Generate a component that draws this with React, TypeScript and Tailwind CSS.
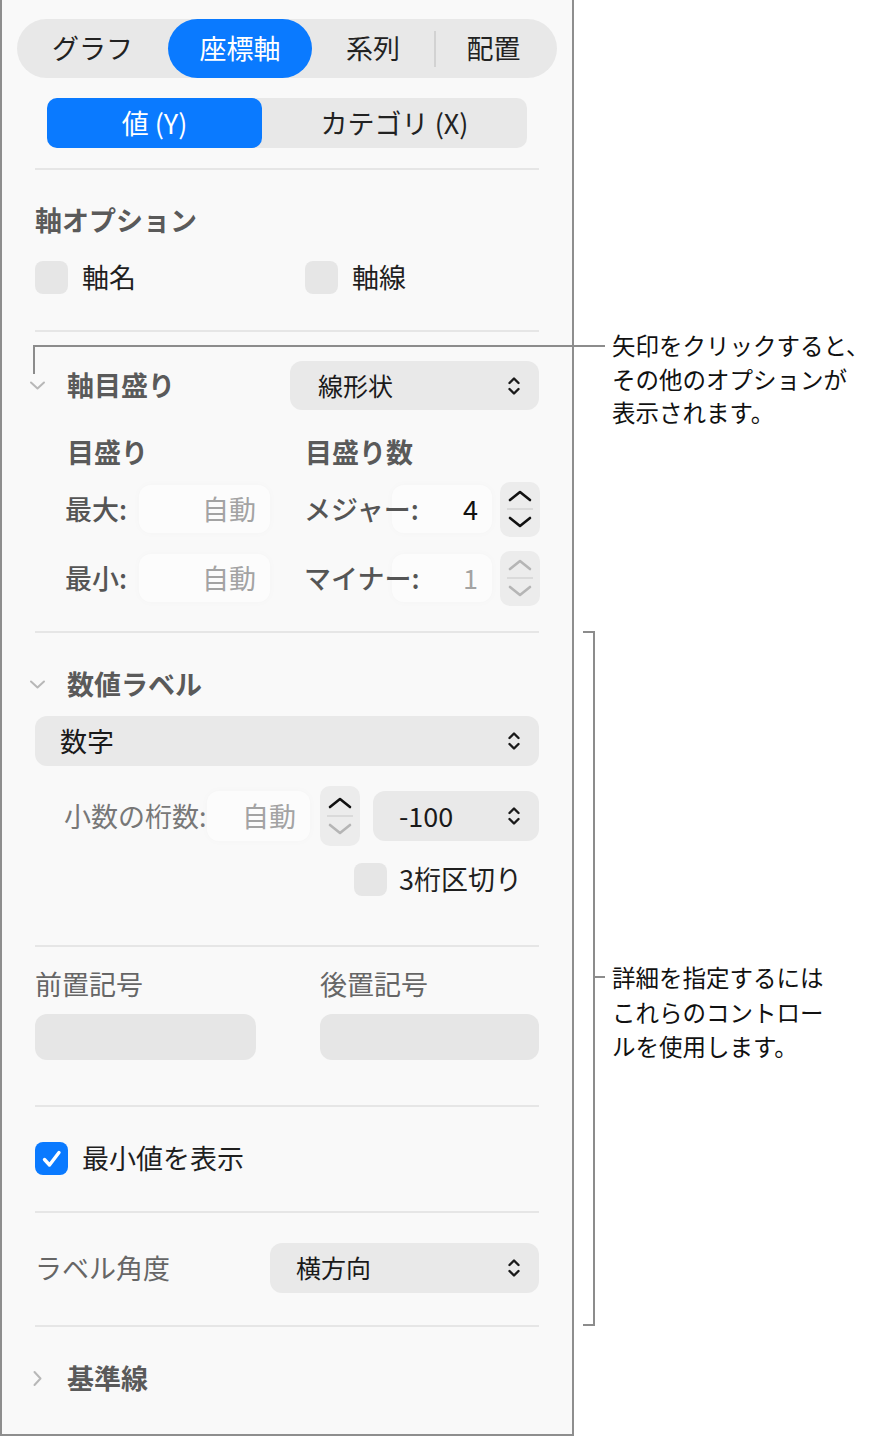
import React from "react";

const font = { fontFamily: '"Noto Sans CJK JP", "Noto Sans", sans-serif' };

function PopupArrows() {
  return (
    <svg width="14" height="22" viewBox="0 0 14 22" fill="none" stroke="#1a1a1a" strokeWidth="2.4" strokeLinecap="round" strokeLinejoin="round">
      <path d="M2.5 8L7 3.5L11.5 8" />
      <path d="M2.5 14L7 18.5L11.5 14" />
    </svg>
  );
}

function Popup({ label, className }: { label: string; className: string }) {
  return (
    <div className={`flex items-center justify-between rounded-[12px] bg-[#e9e9e9] pr-[18px] ${className}`}>
      <span className="whitespace-nowrap text-[#1a1a1a]">{label}</span>
      <PopupArrows />
    </div>
  );
}

function Stepper({ upDim, downDim, className }: { upDim?: boolean; downDim?: boolean; className: string }) {
  const up = upDim ? "#b5b5b5" : "#111111";
  const down = downDim ? "#b5b5b5" : "#111111";
  return (
    <div className={`flex w-[40px] shrink-0 flex-col items-center justify-center rounded-[10px] bg-[#ececec] ${className}`}>
      <svg width="26" height="14" viewBox="0 0 26 14" fill="none" stroke={up} strokeWidth="2.6" strokeLinecap="round" strokeLinejoin="round">
        <path d="M3 11L13 3L23 11" />
      </svg>
      <div className="my-[5px] h-[2px] w-[26px] bg-[#dadada]" />
      <svg width="26" height="14" viewBox="0 0 26 14" fill="none" stroke={down} strokeWidth="2.6" strokeLinecap="round" strokeLinejoin="round">
        <path d="M3 3L13 11L23 3" />
      </svg>
    </div>
  );
}

function Field({ value, className, valueClass = "text-[#a3a3a3]" }: { value: string; className: string; valueClass?: string }) {
  return (
    <div className={`flex shrink-0 items-center justify-end rounded-[12px] bg-white/50 pr-[14px] shadow-[0_0_8px_rgba(0,0,0,0.025)] ${className}`}>
      <span className={`whitespace-nowrap ${valueClass}`}>{value}</span>
    </div>
  );
}

function Checkbox({ checked }: { checked?: boolean }) {
  if (checked) {
    return (
      <div className="flex h-[33px] w-[33px] shrink-0 items-center justify-center rounded-[8px] bg-[#0a7aff]">
        <svg width="22" height="20" viewBox="0 0 22 20" fill="none" stroke="white" strokeWidth="3.4" strokeLinecap="round" strokeLinejoin="round">
          <path d="M3.5 10.5L8.5 16L18 3.5" />
        </svg>
      </div>
    );
  }
  return <div className="h-[33px] w-[33px] shrink-0 rounded-[8px] bg-[#e6e6e6]" />;
}

function Chevron({ dir }: { dir: "down" | "right" }) {
  return (
    <div className="flex w-[17px] justify-center">
      {dir === "down" ? (
        <svg width="17" height="11" viewBox="0 0 17 11" fill="none" stroke="#b8b8b8" strokeWidth="2" strokeLinecap="round" strokeLinejoin="round">
          <path d="M2 2.5L8.5 8.5L15 2.5" />
        </svg>
      ) : (
        <svg width="11" height="17" viewBox="0 0 11 17" fill="none" stroke="#b8b8b8" strokeWidth="2" strokeLinecap="round" strokeLinejoin="round">
          <path d="M2.5 2L8.5 8.5L2.5 15" />
        </svg>
      )}
    </div>
  );
}

function Divider({ className }: { className: string }) {
  return <div className={`h-[2px] bg-[#e6e6e6] ${className}`} />;
}

export default function App() {
  return (
    <div className="relative h-[1436px] w-[875px] bg-white text-[27px]" style={font}>
      <div className="w-[574px] border-x-2 border-b-2 border-[#8e8e8e] bg-[#f9f9f9] pb-[41px] pt-[19px]">
        {/* tabs */}
        <div className="mx-[15px] flex h-[59px] items-center rounded-full bg-[#e8e8e8] text-[27px] text-[#222]">
          <div className="flex w-[151px] justify-center">グラフ</div>
          <div className="flex h-[59px] w-[144px] items-center justify-center rounded-full bg-[#0a7aff] text-white">座標軸</div>
          <div className="flex w-[122px] justify-center">系列</div>
          <div className="h-[36px] w-[2px] bg-[#d2d2d2]" />
          <div className="flex flex-1 justify-center pr-[6px]">配置</div>
        </div>

        <div className="mx-[45px] mt-[20px] flex h-[50px] items-center rounded-[10px] bg-[#e8e8e8] text-[27px] text-[#222]">
          <div className="flex h-[50px] w-[215px] items-center justify-center rounded-[10px] bg-[#0a7aff] text-white">値 (Y)</div>
          <div className="flex flex-1 justify-center">カテゴリ (X)</div>
        </div>

        <div className="px-[33px]">
          <Divider className="mt-[20px]" />

          {/* 軸オプション */}
          <div className="mt-[35px] h-[30px] font-semibold leading-[30px] text-[#5a5a5a]">軸オプション</div>
          <div className="mt-[26px] flex h-[33px] items-center">
            <div className="flex w-[270px] items-center gap-[14px]">
              <Checkbox />
              <span className="text-[#1f1f1f]">軸名</span>
            </div>
            <div className="flex items-center gap-[14px]">
              <Checkbox />
              <span className="text-[#1f1f1f]">軸線</span>
            </div>
          </div>
          <Divider className="mt-[36px]" />

          {/* 軸目盛り */}
          <div className="mt-[29px] flex h-[49px] items-center">
            <div className="ml-[-6px] flex w-[261px] items-center">
              <Chevron dir="down" />
              <span className="ml-[21px] font-semibold text-[#5a5a5a]">軸目盛り</span>
            </div>
            <Popup label="線形状" className="h-[49px] flex-1 pl-[28px] text-[25px]" />
          </div>

          <div className="mt-[28px] flex h-[28px] items-center font-semibold text-[#5a5a5a]">
            <div className="w-[270px] pl-[32px]">目盛り</div>
            <div>目盛り数</div>
          </div>

          <div className="mt-[15px] flex h-[56px] items-center text-[#555]">
            <div className="relative z-10 box-content w-[74px] shrink-0 whitespace-nowrap pl-[30px] font-medium">最大:</div>
            <Field value="自動" className="h-[48px] w-[131px]" />
            <div className="relative z-10 ml-[34px] w-[88px] shrink-0 whitespace-nowrap font-medium">メジャー:</div>
            <Field value="4" valueClass="text-[#111]" className="h-[48px] w-[100px] pr-[12px]" />
            <Stepper className="ml-[8px] h-[55px]" />
          </div>

          <div className="mt-[13px] flex h-[56px] items-center text-[#555]">
            <div className="relative z-10 box-content w-[74px] shrink-0 whitespace-nowrap pl-[30px] font-medium">最小:</div>
            <Field value="自動" className="h-[48px] w-[131px]" />
            <div className="relative z-10 ml-[34px] w-[88px] shrink-0 whitespace-nowrap font-medium">マイナー:</div>
            <Field value="1" className="h-[48px] w-[100px] pr-[12px]" />
            <Stepper upDim downDim className="ml-[8px] h-[55px]" />
          </div>
          <Divider className="mt-[25px]" />

          {/* 数値ラベル */}
          <div className="ml-[-6px] mt-[36px] flex h-[30px] items-center">
            <Chevron dir="down" />
            <span className="ml-[21px] font-semibold text-[#5a5a5a]">数値ラベル</span>
          </div>
          <Popup label="数字" className="mt-[17px] h-[50px] pl-[25px] text-[27px]" />

          <div className="mt-[20px] flex h-[60px] items-center">
            <div className="relative z-10 box-content w-[143px] shrink-0 whitespace-nowrap pl-[29px] text-[#777]">小数の桁数:</div>
            <Field value="自動" className="h-[50px] w-[103px] pr-[10px]" />
            <Stepper downDim className="ml-[10px] h-[60px]" />
            <Popup label="-100" className="ml-[13px] h-[50px] flex-1 pl-[26px] text-[27px]" />
          </div>

          <div className="mt-[17px] flex h-[33px] items-center gap-[12px] pl-[319px]">
            <Checkbox />
            <span className="whitespace-nowrap text-[#1f1f1f]">3桁区切り</span>
          </div>
          <Divider className="mt-[49px]" />

          {/* 前置記号 / 後置記号 */}
          <div className="mt-[22px] flex h-[30px] items-center text-[#666]">
            <div className="w-[285px]">前置記号</div>
            <div>後置記号</div>
          </div>
          <div className="mt-[15px] flex h-[46px]">
            <div className="h-[46px] w-[221px] rounded-[12px] bg-[#e6e6e6]" />
            <div className="ml-[64px] h-[46px] flex-1 rounded-[12px] bg-[#e6e6e6]" />
          </div>
          <Divider className="mt-[45px]" />

          {/* 最小値を表示 */}
          <div className="mt-[35px] flex h-[33px] items-center gap-[14px]">
            <Checkbox checked />
            <span className="text-[#1f1f1f]">最小値を表示</span>
          </div>
          <Divider className="mt-[36px]" />

          {/* ラベル角度 */}
          <div className="mt-[30px] flex h-[50px] items-center">
            <div className="w-[235px] text-[#666]">ラベル角度</div>
            <Popup label="横方向" className="h-[50px] flex-1 pl-[26px] text-[25px]" />
          </div>
          <Divider className="mt-[32px]" />

          {/* 基準線 */}
          <div className="ml-[-6px] mt-[36px] flex h-[30px] items-center">
            <Chevron dir="right" />
            <span className="ml-[21px] font-semibold text-[#5a5a5a]">基準線</span>
          </div>
        </div>
      </div>

      {/* callout 1 */}
      <div className="absolute left-[33px] top-[345px] h-[29px] w-[2px] bg-[#8c8c8c]" />
      <div className="absolute left-[33px] top-[345px] h-[2px] w-[572px] bg-[#8c8c8c]" />
      <div className="absolute left-[612px] top-[329px] whitespace-nowrap text-[23.5px] leading-[33.5px] text-[#111]">
        <div>矢印をクリックすると、</div>
        <div>その他のオプションが</div>
        <div>表示されます。</div>
      </div>

      {/* callout 2 */}
      <div className="absolute left-[583px] top-[631px] h-[2px] w-[12px] bg-[#8c8c8c]" />
      <div className="absolute left-[593px] top-[631px] h-[695px] w-[2px] bg-[#8c8c8c]" />
      <div className="absolute left-[583px] top-[1324px] h-[2px] w-[12px] bg-[#8c8c8c]" />
      <div className="absolute left-[595px] top-[976px] h-[2px] w-[10px] bg-[#8c8c8c]" />
      <div className="absolute left-[612px] top-[960px] whitespace-nowrap text-[23.5px] leading-[34.5px] text-[#111]">
        <div>詳細を指定するには</div>
        <div>これらのコントロー</div>
        <div>ルを使用します。</div>
      </div>
    </div>
  );
}
